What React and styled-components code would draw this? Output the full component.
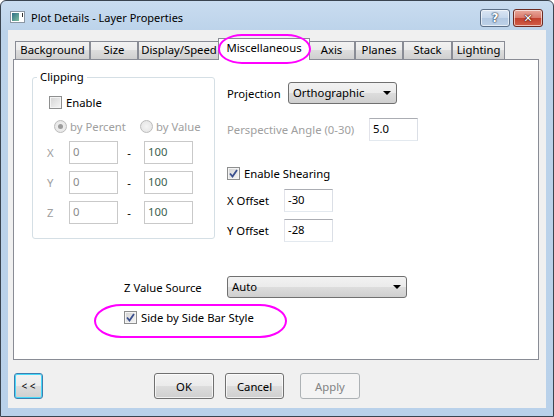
import React from "react";
import styled, { createGlobalStyle, css } from "styled-components";

const GlobalStyle = createGlobalStyle`
  html, body { margin: 0; padding: 0; background: #fff; }
  body {
    font-family: "Noto Sans", "Open Sans", sans-serif;
    font-size: 11.3px;
    color: #000;
  }
  * { box-sizing: border-box; }
`;

const tabs = [
	{ label: "Background", width: 75 },
	{ label: "Size", width: 48 },
	{ label: "Display/Speed", width: 82 },
	{ label: "Miscellaneous", width: 88, active: true },
	{ label: "Axis", width: 47 },
	{ label: "Planes", width: 48 },
	{ label: "Stack", width: 49 },
	{ label: "Lighting", width: 53 },
];

const ranges = [
	{ axis: "X", from: "0", to: "100" },
	{ axis: "Y", from: "0", to: "100" },
	{ axis: "Z", from: "0", to: "100" },
];

const WindowIcon = () => (
	<svg width="15" height="12" viewBox="0 0 15 12">
		<defs>
			<linearGradient id="ico" x1="0" y1="0" x2="1" y2="1">
				<stop offset="0" stopColor="#2f6f86" />
				<stop offset="1" stopColor="#7fc0a0" />
			</linearGradient>
		</defs>
		<rect x="0.5" y="0.5" width="14" height="11" fill="#fff" stroke="#8a96a3" />
		<rect x="2" y="2" width="7" height="8" fill="url(#ico)" />
		<rect x="12" y="2" width="1" height="4" fill="#333" />
	</svg>
);

const Check = () => (
	<svg width="9" height="9" viewBox="0 0 9 9">
		<path d="M1 4.5 L3.5 7.5 L8 1" fill="none" stroke="#3a4f8e" strokeWidth="1.8" />
	</svg>
);

const App = () => {
	return (
		<>
			<GlobalStyle />
			<Window>
				<TitleBar>
					<WindowIcon />
					<Title>Plot Details - Layer Properties</Title>
					<Caption>
						<CaptionButton>?</CaptionButton>
						<CaptionButton $close>✕</CaptionButton>
					</Caption>
				</TitleBar>
				<Client>
					<TabBar>
						{tabs.map((t) => (
							<Tab key={t.label} $width={t.width} $active={t.active}>
								{t.label}
							</Tab>
						))}
					</TabBar>
					<Panel>
						<TopSection>
							<Group>
								<Legend>Clipping</Legend>
								<CheckRow>
									<CheckBox />
									<span>Enable</span>
								</CheckRow>
								<RadioRow>
									<RadioItem>
										<Radio $checked />
										<span>by Percent</span>
									</RadioItem>
									<RadioItem>
										<Radio />
										<span>by Value</span>
									</RadioItem>
								</RadioRow>
								{ranges.map((r) => (
									<RangeRow key={r.axis}>
										<AxisLabel>{r.axis}</AxisLabel>
										<Field $disabled>{r.from}</Field>
										<Dash>-</Dash>
										<Field $disabled $dark>
											{r.to}
										</Field>
									</RangeRow>
								))}
							</Group>
							<RightColumn>
								<FormRow $mt={0}>
									<Label $width={61}>Projection</Label>
									<Select $width={109}>Orthographic</Select>
								</FormRow>
								<FormRow $mt={14}>
									<Label $width={142} $disabled>
										Perspective Angle (0-30)
									</Label>
									<Field>5.0</Field>
								</FormRow>
								<CheckRow $mt={24}>
									<CheckBox>
										<Check />
									</CheckBox>
									<span>Enable Shearing</span>
								</CheckRow>
								<FormRow $mt={8}>
									<Label $width={57}>X Offset</Label>
									<Field>-30</Field>
								</FormRow>
								<FormRow $mt={7}>
									<Label $width={57}>Y Offset</Label>
									<Field>-28</Field>
								</FormRow>
							</RightColumn>
						</TopSection>
						<BottomSection>
							<FormRow $mt={0}>
								<Label $width={103}>Z Value Source</Label>
								<Select $width={180} $height={22}>
									Auto
								</Select>
							</FormRow>
							<CheckRow $mt={11}>
								<CheckBox>
									<Check />
								</CheckBox>
								<span>Side by Side Bar Style</span>
							</CheckRow>
						</BottomSection>
					</Panel>
					<Footer>
						<Button $width={29} $focused>
							&lt; &lt;
						</Button>
						<Button $width={60} $ml={111}>
							OK
						</Button>
						<Button $width={59} $ml={11}>
							Cancel
						</Button>
						<Button $width={60} $ml={16} $disabled>
							Apply
						</Button>
					</Footer>
				</Client>
				<Highlight $left={217} $top={33} $w={93} $h={30} />
				<Highlight $left={93} $top={303} $w={193} $h={34} />
			</Window>
		</>
	);
};

const Window = styled.div`
	position: relative;
	width: 554px;
	height: 417px;
	border: 1px solid #3a4450;
	border-radius: 6px 6px 0 0;
	background: linear-gradient(#c9dcf0, #bcd3ea 30px, #b9d1ea);
	padding: 0 7px 8px;
	display: flex;
	flex-direction: column;
	overflow: hidden;
`;
const TitleBar = styled.div`
	height: 29px;
	flex: none;
	display: flex;
	align-items: center;
	padding: 3px 0 0 2px;
	gap: 6px;
`;
const Title = styled.div`
	font-size: 11px;
	color: #000;
	flex: 1;
`;
const Caption = styled.div`
	display: flex;
	gap: 3px;
	margin-right: 3px;
	margin-top: 2px;
`;
const CaptionButton = styled.div`
	width: 30px;
	height: 18px;
	border: 1px solid #5c6f87;
	border-radius: 3px;
	display: flex;
	align-items: center;
	justify-content: center;
	font: bold 12px "DejaVu Sans", sans-serif;
	color: #fff;
	text-shadow: 0 0 1px #2a3a50, 0 0 1px #2a3a50, 0 0 2px #2a3a50;
	background: linear-gradient(#dbe6f4, #c5d7ec 50%, #b2c8e2 50%, #bdd1e8);
	box-shadow: inset 0 0 0 1px rgba(255, 255, 255, 0.6);
	${(p) =>
		p.$close &&
		css`
			border-color: #6d2b22;
			font-size: 11px;
			background: linear-gradient(#e9a99c, #d9786a 50%, #c2402d 50%, #d25f48);
			text-shadow: 0 0 1px #4a1008, 0 0 1px #4a1008, 0 0 2px #4a1008;
		`}
`;
const Client = styled.div`
	flex: 1;
	background: #f0f0f0;
	padding: 8px 0 0 5px;
	display: flex;
	flex-direction: column;
`;
const TabBar = styled.div`
	display: flex;
	align-items: flex-end;
	height: 22px;
	padding-left: 2px;
	margin-bottom: -1px;
	position: relative;
	z-index: 1;
`;
const Tab = styled.div`
	width: ${(p) => p.$width}px;
	height: 18px;
	margin-bottom: 1px;
	border: 1px solid #898c95;
	border-bottom: none;
	background: linear-gradient(#f2f2f2, #ebebeb 50%, #dddddd 50%, #cfcfcf);
	text-align: center;
	line-height: 16px;
	white-space: nowrap;
	${(p) =>
		p.$active &&
		css`
			width: ${p.$width + 4}px;
			height: 22px;
			margin: 0 -2px;
			background: #fff;
			line-height: 18px;
			position: relative;
			z-index: 1;
		`}
`;
const Panel = styled.div`
	width: 526px;
	height: 301px;
	flex: none;
	background: #fff;
	border: 1px solid #898c95;
	padding-left: 18px;
`;
const TopSection = styled.div`
	display: flex;
	align-items: flex-start;
`;
const Group = styled.div`
	position: relative;
	margin-top: 17px;
	width: 183px;
	height: 162px;
	border: 1px solid #d5dfe5;
	border-radius: 3px;
	padding: 16px 0 0 16px;
`;
const Legend = styled.div`
	position: absolute;
	top: -9px;
	left: 4px;
	padding: 0 3px;
	background: #fff;
	line-height: 16px;
`;
const CheckRow = styled.div`
	display: flex;
	align-items: center;
	gap: 4px;
	height: 16px;
	margin-top: ${(p) => p.$mt || 0}px;
`;
const CheckBox = styled.span`
	width: 13px;
	height: 13px;
	flex: none;
	border: 1px solid #8e8f8f;
	background: linear-gradient(135deg, #d3d3d3, #f6f6f6);
	box-shadow: inset 0 0 0 1px #f4f4f4;
	display: flex;
	align-items: center;
	justify-content: center;
`;
const RadioRow = styled.div`
	display: flex;
	margin: 8px 0 0 5px;
	height: 16px;
	color: #a0a0a0;
`;
const RadioItem = styled.div`
	width: 86px;
	flex: none;
	display: flex;
	align-items: center;
	gap: 3px;
`;
const Radio = styled.span`
	width: 13px;
	height: 13px;
	flex: none;
	border-radius: 50%;
	border: 1px solid #bcbcbc;
	background: radial-gradient(circle, #f4f4f4, #e2e2e2);
	display: flex;
	align-items: center;
	justify-content: center;
	${(p) =>
		p.$checked &&
		css`
			&::after {
				content: "";
				width: 5px;
				height: 5px;
				border-radius: 50%;
				background: #9c9c9c;
			}
		`}
`;
const RangeRow = styled.div`
	display: flex;
	align-items: center;
	margin: 7px 0 0 -2px;
	&:nth-of-type(1) {
		margin-top: 9px;
	}
`;
const AxisLabel = styled.span`
	width: 22px;
	color: #a0a0a0;
`;
const Dash = styled.span`
	width: 26px;
	text-align: center;
	padding-right: 4px;
`;
const Field = styled.div`
	width: 49px;
	height: 23px;
	flex: none;
	border: 1px solid;
	border-color: #abadb3 #dbdfe6 #e3e9ef #e2e3ea;
	background: #fff;
	padding-left: 3px;
	line-height: 20px;
	${(p) =>
		p.$disabled &&
		css`
			border-color: #c9c9c9;
			color: ${p.$dark ? "#3d5f4f" : "#8a8a8a"};
		`}
`;
const RightColumn = styled.div`
	margin: 22px 0 0 12px;
	display: flex;
	flex-direction: column;
`;
const FormRow = styled.div`
	display: flex;
	align-items: center;
	margin-top: ${(p) => p.$mt}px;
`;
const Label = styled.span`
	width: ${(p) => p.$width}px;
	flex: none;
	white-space: nowrap;
	color: ${(p) => (p.$disabled ? "#a0a0a0" : "#000")};
`;
const Select = styled.div`
	position: relative;
	width: ${(p) => p.$width}px;
	height: ${(p) => p.$height || 22}px;
	border: 1px solid #707070;
	border-radius: 3px;
	background: linear-gradient(#f2f2f2, #ebebeb 50%, #dddddd 50%, #cfcfcf);
	padding-left: 4px;
	line-height: 20px;
	&::after {
		content: "";
		position: absolute;
		right: 5px;
		top: 8px;
		border: 4px solid transparent;
		border-top: 4px solid #000;
		border-bottom: none;
	}
`;
const BottomSection = styled.div`
	margin-top: 34px;
	padding-left: 92px;
`;
const Footer = styled.div`
	display: flex;
	margin-top: 13px;
	padding-left: 1px;
`;
const Button = styled.div`
	width: ${(p) => p.$width}px;
	height: 26px;
	margin-left: ${(p) => p.$ml || 0}px;
	border: 1px solid #707070;
	border-radius: 3px;
	background: linear-gradient(#f2f2f2, #ebebeb 50%, #dddddd 50%, #cfcfcf);
	box-shadow: inset 0 0 0 1px rgba(255, 255, 255, 0.7);
	display: flex;
	align-items: center;
	justify-content: center;
	${(p) =>
		p.$focused &&
		css`
			border-color: #3c7fb1;
			box-shadow: inset 0 0 0 1px #48d8f8;
			font-size: 10px;
		`}
	${(p) =>
		p.$disabled &&
		css`
			border-color: #adb2b5;
			background: #f4f4f4;
			box-shadow: none;
			color: #838383;
		`}
`;
const Highlight = styled.div`
	position: absolute;
	left: ${(p) => p.$left}px;
	top: ${(p) => p.$top}px;
	width: ${(p) => p.$w}px;
	height: ${(p) => p.$h}px;
	border: 2px solid #f0f;
	border-radius: ${(p) => p.$h * 0.8}px / ${(p) => p.$h / 2}px;
	pointer-events: none;
	z-index: 5;
`;

export default App;
